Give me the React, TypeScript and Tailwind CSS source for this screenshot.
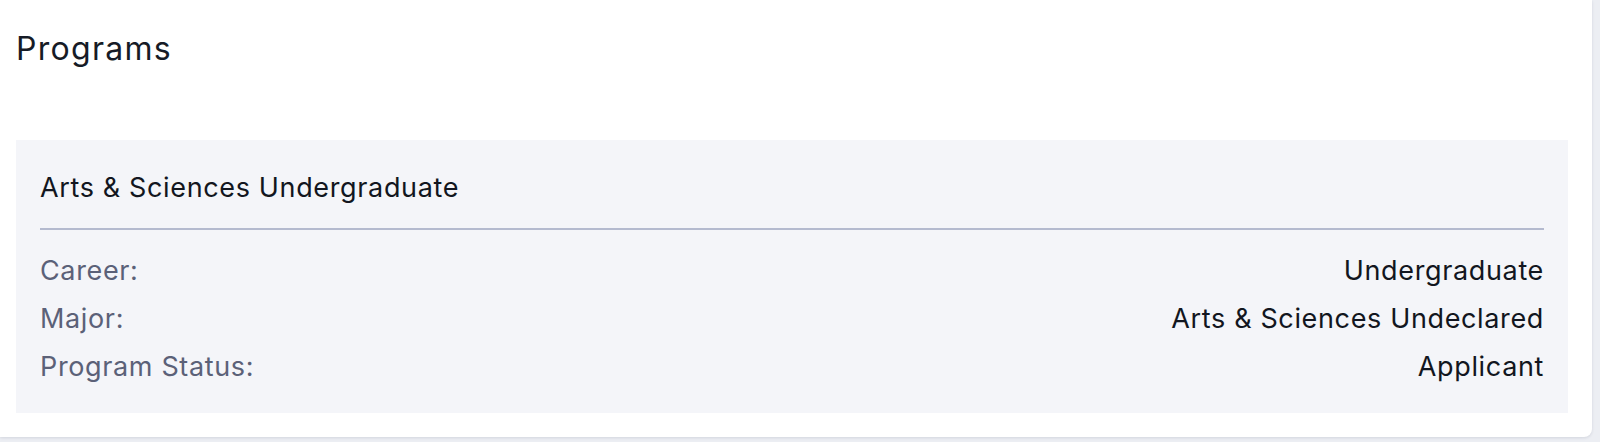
const rows = [
  { label: "Career:", value: "Undergraduate" },
  { label: "Major:", value: "Arts & Sciences Undeclared" },
  { label: "Program Status:", value: "Applicant" },
];

export default function App() {
  return (
    <div
      className="h-[442px] w-[1600px] overflow-hidden bg-[#eceef3]"
      style={{ fontFamily: "Inter, 'Noto Sans', sans-serif" }}
    >
      {/* Card */}
      <div className="h-[437px] w-[1592px] rounded-br-lg bg-white pl-4 pr-6 pt-[29px] shadow-[0_1px_3px_rgba(30,40,70,0.12)]">
        <h2 className="text-[32px] leading-[40px] font-normal tracking-[0.04em] text-[#161b26]">Programs</h2>

        {/* Program block */}
        <div className="mt-[71px] bg-[#f4f5f9] px-6 pt-8 pb-[22px] tracking-[0.04em]">
          <div className="text-[27px] leading-[32px] text-[#121620]">
            Arts &amp; Sciences Undergraduate
          </div>
          <div className="mt-6 h-[2px] bg-[#b4bacf]" />
          <div className="mt-[17px]">
            {rows.map((r) => (
              <div key={r.label} className="flex h-[48px] items-center justify-between text-[27px] leading-[48px]">
                <span className="text-[#5b6178]">{r.label}</span>
                <span className="text-[#121620]">{r.value}</span>
              </div>
            ))}
          </div>
        </div>
      </div>
    </div>
  );
}
